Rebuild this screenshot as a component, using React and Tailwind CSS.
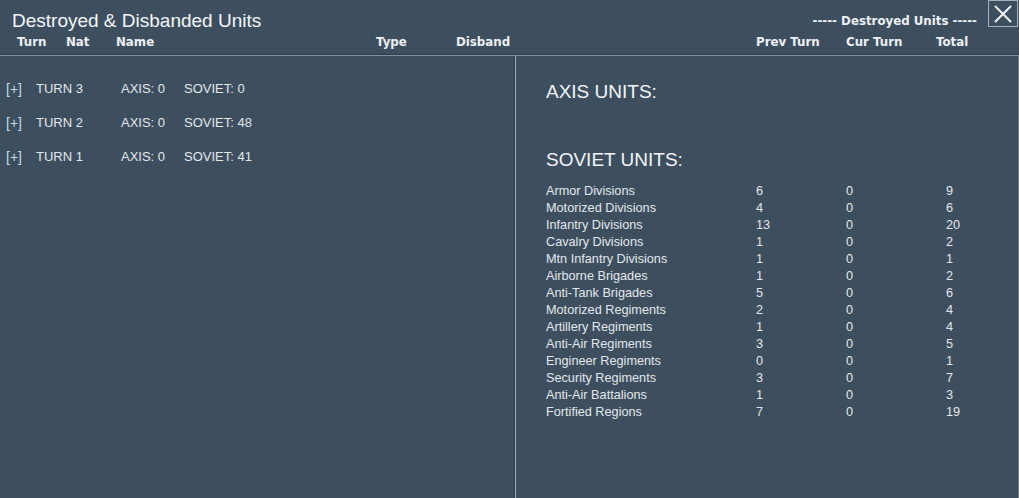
const turns = [
  { t: "TURN 3", a: "AXIS: 0", s: "SOVIET: 0" },
  { t: "TURN 2", a: "AXIS: 0", s: "SOVIET: 48" },
  { t: "TURN 1", a: "AXIS: 0", s: "SOVIET: 41" },
];

const units = [
  ["Armor Divisions", 6, 0, 9],
  ["Motorized Divisions", 4, 0, 6],
  ["Infantry Divisions", 13, 0, 20],
  ["Cavalry Divisions", 1, 0, 2],
  ["Mtn Infantry Divisions", 1, 0, 1],
  ["Airborne Brigades", 1, 0, 2],
  ["Anti-Tank Brigades", 5, 0, 6],
  ["Motorized Regiments", 2, 0, 4],
  ["Artillery Regiments", 1, 0, 4],
  ["Anti-Air Regiments", 3, 0, 5],
  ["Engineer Regiments", 0, 0, 1],
  ["Security Regiments", 3, 0, 7],
  ["Anti-Air Battalions", 1, 0, 3],
  ["Fortified Regions", 7, 0, 19],
];

export default function App() {
  return (
    <div className="w-[1019px] h-[498px] bg-[#3d4f5f] text-[#e3e7eb] overflow-hidden flex flex-col font-['Liberation_Sans',Arial,sans-serif]">
      <div className="h-[56px] shrink-0 flex flex-col border-b border-[#8392a0] shadow-[0_-1px_0_#2f3d4a_inset]">
        <div className="h-[33px] flex items-start">
          <div className="pl-[12px] pt-[10px] text-[19px] leading-[22px] text-[#f4f6f8]">
            Destroyed &amp; Disbanded Units
          </div>
          <div className="flex-1" />
          <div className="pt-[15px] mr-[11px] text-[11.8px] leading-[13px] font-bold text-[#eef1f4] font-['DejaVu_Sans',Verdana,sans-serif]">
            ----- Destroyed Units -----
          </div>
          <div className="w-[30px] h-[27px] mr-[1px] border border-[#a4b0ba] flex items-center justify-center">
            <svg width="20" height="20" viewBox="0 0 20 20">
              <path d="M2 2 L18 18 M18 2 L2 18" stroke="#f2f4f6" strokeWidth="2" fill="none" />
            </svg>
          </div>
        </div>
        <div className="h-[19px] flex items-center pl-[17px] text-[11.8px] font-bold text-[#eef1f4] font-['DejaVu_Sans',Verdana,sans-serif]">
          <span className="w-[49px]">Turn</span>
          <span className="w-[50px]">Nat</span>
          <span className="w-[260px]">Name</span>
          <span className="w-[80px]">Type</span>
          <span className="w-[300px]">Disband</span>
          <span className="w-[90px]">Prev Turn</span>
          <span className="w-[90px]">Cur Turn</span>
          <span>Total</span>
        </div>
      </div>
      <div className="flex-1 flex min-h-0">
        <div className="w-[516px] shrink-0 border-r border-[#a6b3be] shadow-[-1px_0_0_#2f3d4a_inset] pt-[16px] pl-[6px] text-[13px]">
          {turns.map((r) => (
            <div key={r.t} className="h-[34px] flex items-center">
              <span className="w-[30px] text-[14px] text-[#c0d8e6]">[+]</span>
              <span className="w-[85px]">{r.t}</span>
              <span className="w-[63px]">{r.a}</span>
              <span>{r.s}</span>
            </div>
          ))}
        </div>
        <div className="flex-1 pl-[30px] border-r border-[#6f7f8c]">
          <div className="mt-[25px] text-[19px] leading-[22px] text-[#f2f4f6]">AXIS UNITS:</div>
          <div className="mt-[46px] text-[19px] leading-[22px] text-[#f2f4f6]">SOVIET UNITS:</div>
          <div className="mt-[12px] text-[12.7px]">
            {units.map((u) => (
              <div key={u[0]} className="h-[17px] flex items-center">
                <span className="w-[210px]">{u[0]}</span>
                <span className="w-[90px]">{u[1]}</span>
                <span className="w-[100px]">{u[2]}</span>
                <span>{u[3]}</span>
              </div>
            ))}
          </div>
        </div>
      </div>
    </div>
  );
}
